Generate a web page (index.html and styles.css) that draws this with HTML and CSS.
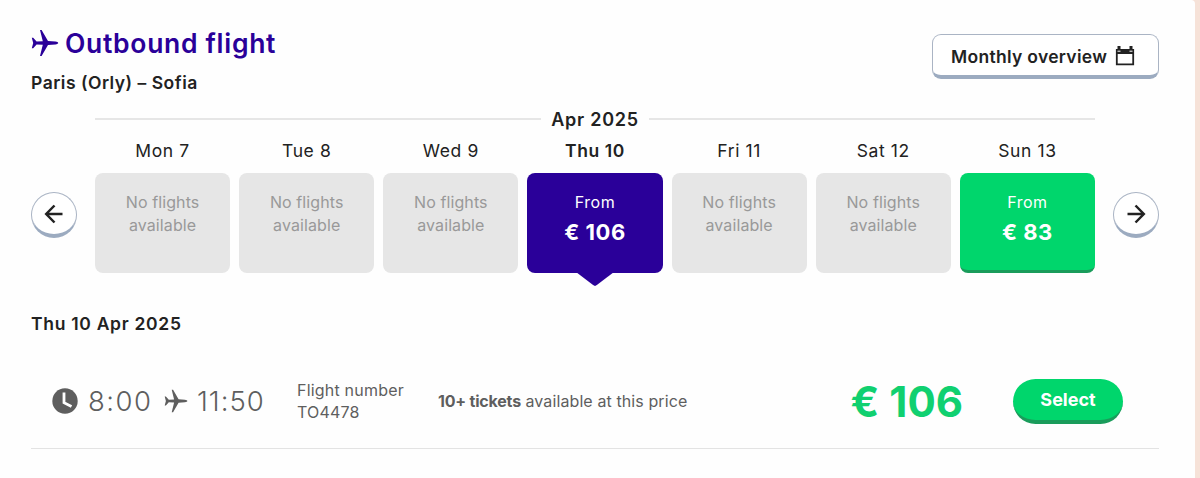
FILE: index.html
```html
<!DOCTYPE html>
<html lang="en">
<head>
  <meta charset="UTF-8" />
  <meta name="viewport" content="width=device-width, initial-scale=1.0"/>
  <title>Outbound flight</title>
  <link rel="stylesheet" href="styles.css">
</head>
<body>
  <svg class="sprite" aria-hidden="true">
    <symbol id="plane" viewBox="0 0 28 28">
      <path d="M.8 8.8h1.4l3.4 3.8 6.2-.3L9 1h1.6l6.4 11.1 7.4.5c1.8.2 2.8.8 2.8 1.4s-1 1.2-2.8 1.4l-7.4.5L10.6 27H9l2.8-11.3-6.2-.3-3.4 3.8H.8L2.2 14z" fill="currentColor"/>
    </symbol>
  </svg>

  <div class="panel">
    <header class="header">
      <div>
        <h1 class="title">
          <svg class="title-icon"><use href="#plane"/></svg>
          <span>Outbound flight</span>
        </h1>
        <p class="route">Paris (Orly) – Sofia</p>
      </div>
      <button class="overview-btn">
        <span>Monthly overview</span>
        <svg class="calendar-icon" viewBox="0 0 20 20">
          <path d="M1.8 4h16.4v14.4H1.8z" fill="none" stroke="#222" stroke-width="1.8"/>
          <path d="M1 3h18v5H1zM2.5 0h3v5h-3zM14.5 0h3v5h-3z" fill="#222"/>
          <path d="M2.5 5.2h3M14.5 5.2h3" stroke="#fff" stroke-width="1"/>
        </svg>
      </button>
    </header>

    <section class="week">
      <button class="arrow" aria-label="Previous week">
        <svg viewBox="0 0 20 20"><path d="M18.5 10H2M10.5 1.5L2.2 10l8.3 8.5"/></svg>
      </button>
      <div class="week-main">
        <div class="month"><span>Apr 2025</span></div>
        <div class="days">
          <div class="day">
            <div class="day-name">Mon 7</div>
            <div class="card">No flights<br>available</div>
          </div>
          <div class="day">
            <div class="day-name">Tue 8</div>
            <div class="card">No flights<br>available</div>
          </div>
          <div class="day">
            <div class="day-name">Wed 9</div>
            <div class="card">No flights<br>available</div>
          </div>
          <div class="day">
            <div class="day-name current">Thu 10</div>
            <div class="card fare selected">From<strong>€ 106</strong></div>
          </div>
          <div class="day">
            <div class="day-name">Fri 11</div>
            <div class="card">No flights<br>available</div>
          </div>
          <div class="day">
            <div class="day-name">Sat 12</div>
            <div class="card">No flights<br>available</div>
          </div>
          <div class="day">
            <div class="day-name">Sun 13</div>
            <div class="card fare offer">From<strong>€ 83</strong></div>
          </div>
        </div>
      </div>
      <button class="arrow" aria-label="Next week">
        <svg viewBox="0 0 20 20"><path d="M1.5 10H18M9.5 1.5l8.3 8.5-8.3 8.5"/></svg>
      </button>
    </section>

    <h2 class="date">Thu 10 Apr 2025</h2>

    <div class="flight">
      <div class="times">
        <svg class="clock-icon" viewBox="0 0 26 26">
          <circle cx="13" cy="13" r="12.7" fill="#5e5e5e"/>
          <path d="M12 4.5v10.2l7.5 3.8" fill="none" stroke="#fff" stroke-width="2.8"/>
        </svg>
        <span class="depart">8:00</span>
        <svg class="plane-icon"><use href="#plane"/></svg>
        <span class="arrive">11:50</span>
      </div>
      <div class="number">Flight number<br><span>TO4478</span></div>
      <div class="tickets"><strong>10+ tickets</strong> available at this price</div>
      <div class="price">€ 106</div>
      <button class="select-btn">Select</button>
    </div>
  </div>
</body>
</html>
```
FILE: styles.css
```css
* {
  box-sizing: border-box;
}

body {
  margin: 0;
  background: #f6e2d8;
  font-family: Inter, "Liberation Sans", sans-serif;
  color: #222;
}

h1, h2, p {
  margin: 0;
}

button {
  font-family: inherit;
  padding: 0;
  cursor: pointer;
}

.sprite {
  display: none;
}

.panel {
  height: 478px;
  margin-right: 5px;
  padding: 28px 36px 0 31px;
  background: #fefefe;
  border-top-right-radius: 4px;
}

.header {
  display: flex;
  justify-content: space-between;
  height: 81px;
}

.title {
  display: flex;
  align-items: center;
  gap: 6px;
  height: 30px;
  font-size: 26.5px;
  font-weight: 600;
  letter-spacing: 0.7px;
  color: #2a0099;
  white-space: nowrap;
}

.title-icon {
  width: 28px;
  height: 28px;
}

.route {
  margin-top: 15px;
  font-size: 17.5px;
  line-height: 20px;
  font-weight: 600;
  letter-spacing: 0.5px;
}

.overview-btn {
  display: flex;
  align-items: center;
  gap: 8px;
  width: 227px;
  height: 45px;
  margin-top: 6px;
  padding: 2px 0 0 18px;
  background: #fff;
  border: 1px solid #aab4c4;
  border-bottom: 4px solid #9cabc0;
  border-radius: 9px;
  font-size: 17.5px;
  font-weight: 600;
  letter-spacing: 0.3px;
  color: #222;
}

.calendar-icon {
  width: 20px;
  height: 20px;
}

.week {
  display: flex;
  justify-content: space-between;
}

.arrow {
  display: flex;
  align-items: center;
  justify-content: center;
  width: 46px;
  height: 46px;
  margin-top: 83px;
  background: #fff;
  border: 1px solid #aab4c4;
  border-bottom: 4px solid #9cabc0;
  border-radius: 50%;
}

.arrow svg {
  width: 20px;
  height: 20px;
  fill: none;
  stroke: #222;
  stroke-width: 2.5;
}

.week-main {
  width: 1000px;
}

.month {
  display: flex;
  align-items: center;
  gap: 10px;
  height: 20px;
  font-size: 18px;
  font-weight: 600;
  letter-spacing: 0.75px;
}

.month::before,
.month::after {
  content: "";
  flex: 1;
  height: 2px;
  background: #e6e6e6;
}

.days {
  display: grid;
  grid-template-columns: repeat(7, 1fr);
  gap: 9px;
  margin-top: 12px;
  text-align: center;
}

.day-name {
  font-size: 17.5px;
  line-height: 20px;
  letter-spacing: 0.6px;
  margin-bottom: 12px;
}

.day-name.current {
  font-weight: 600;
}

.card {
  height: 100px;
  padding-top: 18px;
  background: #e6e6e6;
  border-radius: 8px;
  font-size: 16px;
  line-height: 23px;
  letter-spacing: 0.1px;
  color: #999;
}

.fare {
  letter-spacing: 0.5px;
  color: #fff;
}

.fare strong {
  display: block;
  margin-top: 4px;
  font-size: 22px;
  line-height: 28px;
  font-weight: 700;
}

.selected {
  position: relative;
  background: #2a0099;
}

/* pointer to the flight list below */
.selected::after {
  content: "";
  position: absolute;
  top: 99px;
  left: 50%;
  width: 38px;
  height: 14px;
  margin-left: -19px;
  background: #2a0099;
  clip-path: polygon(0 0, 100% 0, 55% 92%, 50% 100%, 45% 92%);
}

.offer {
  background: #00d66c;
  border-bottom: 3px solid #1a9c5b;
}

.date {
  margin-top: 41px;
  font-size: 17.5px;
  line-height: 20px;
  font-weight: 600;
  letter-spacing: 0.7px;
}

.flight {
  display: flex;
  align-items: center;
  height: 115px;
  padding: 20px 36px 0 21px;
  border-bottom: 1px solid #e3e3e3;
  color: #5e5e5e;
  white-space: nowrap;
}

.times {
  display: flex;
  align-items: center;
  width: 245px;
  font-size: 27.5px;
  font-weight: 300;
}

.clock-icon {
  width: 26px;
  height: 26px;
  margin-right: 10px;
}

.depart {
  width: 76px;
  letter-spacing: 1.5px;
}

.plane-icon {
  width: 24px;
  height: 24px;
  margin-right: 9px;
}

.arrive {
  letter-spacing: 1px;
}

.number {
  width: 141px;
  font-size: 16px;
  line-height: 22px;
  letter-spacing: 0.2px;
}

.tickets {
  font-size: 16px;
  letter-spacing: 0.1px;
}

.tickets strong {
  letter-spacing: -0.2px;
}

.price {
  margin-left: auto;
  margin-right: 50px;
  font-size: 42px;
  font-weight: 700;
  color: #10d070;
}

.select-btn {
  width: 110px;
  height: 45px;
  background: #00d66c;
  border: 0;
  border-bottom: 4px solid #1a9c5b;
  border-radius: 23px;
  font-size: 18px;
  font-weight: 700;
  color: #fff;
}
```
